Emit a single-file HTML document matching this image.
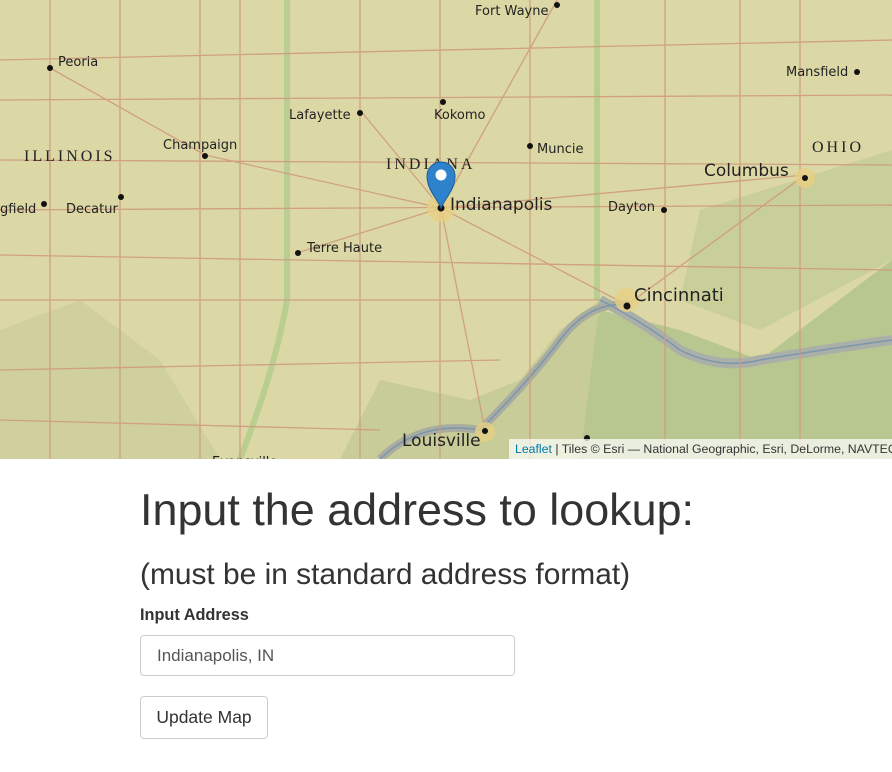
<!DOCTYPE html>
<html><head><meta charset="utf-8"><style>
body{margin:0;width:892px;height:772px;overflow:hidden;background:#fff;font-family:"Liberation Sans",sans-serif;color:#333}
#map{position:absolute;left:0;top:0;width:892px;height:459px;overflow:hidden;background:#dcd8a6}
.attr{position:absolute;left:509px;top:439px;height:20px;width:400px;background:rgba(255,255,255,0.7);font-size:12.3px;line-height:20px;padding-left:6px;color:#333;white-space:nowrap}
.attr a{color:#0078a8;text-decoration:none}
h1{position:absolute;left:140px;top:486px;margin:0;font-size:44.9px;font-weight:400;line-height:48px}
h3{position:absolute;left:140px;top:558px;margin:0;font-size:29.9px;font-weight:400;line-height:34px}
label{position:absolute;left:140px;top:606px;font-size:16.3px;font-weight:bold}
.inp{position:absolute;left:140px;top:635px;width:375px;height:41px;border:1px solid #ccc;border-radius:4px;box-sizing:border-box;padding-left:16px;font-size:17px;line-height:40px;color:#555}
.btn{position:absolute;left:140px;top:696px;width:128px;height:43px;border:1px solid #ccc;border-radius:4px;box-sizing:border-box;text-align:center;font-size:17.5px;line-height:41px;color:#333}
svg text{font-family:"DejaVu Sans",sans-serif;fill:#222}
</style></head><body>
<div id="map">
<svg width="892" height="459" viewBox="0 0 892 459">
<rect width="892" height="459" fill="#dcd8a6"/>
<path d="M560 459 L600 310 L680 330 L760 360 L892 260 L892 459Z" fill="#b8c68f"/>
<path d="M700 210 L892 150 L892 260 L760 330 L680 300Z" fill="#c9cf98"/>
<path d="M340 459 L380 380 L470 400 L520 380 L560 330 L600 300 L580 459Z" fill="#c7cc98"/>
<path d="M0 330 L80 300 L160 360 L220 459 L0 459Z" fill="#d0d09e"/>
<path d="M600 300 Q640 320 680 350 Q720 370 760 360 Q820 350 892 340" stroke="#aab0a8" stroke-width="10" fill="none"/>
<path d="M380 459 Q420 420 480 430 Q530 380 560 340 Q590 300 630 305" stroke="#a9ad9f" stroke-width="8" fill="none"/>
<path d="M600 300 Q640 320 680 350 Q720 370 760 360 Q820 350 892 340" stroke="#7b95b0" stroke-width="1.5" fill="none"/>
<path d="M380 459 Q420 420 480 430 Q530 380 560 340 Q590 300 630 305" stroke="#7b95b0" stroke-width="1.5" fill="none"/>
<g stroke="#a8cc88" stroke-width="6" opacity="0.7" fill="none">
<path d="M287 0 L287 300 Q275 370 240 459"/><path d="M597 0 L597 300"/></g>
<g stroke="#cf9a7c" stroke-width="1.3" fill="none" opacity="0.9">
<path d="M0 60 L892 40"/><path d="M0 100 L892 95"/><path d="M0 160 L892 165"/><path d="M0 210 L892 205"/><path d="M0 255 L892 270"/><path d="M0 300 L600 300"/><path d="M0 370 L500 360"/><path d="M0 420 L380 430"/>
<path d="M50 0 L50 459"/><path d="M120 0 L120 459"/><path d="M200 0 L200 459"/><path d="M240 0 L240 459"/><path d="M360 0 L360 459"/><path d="M440 0 L440 459"/><path d="M530 0 L530 459"/><path d="M665 0 L665 459"/><path d="M740 0 L740 459"/><path d="M800 0 L800 459"/>
<path d="M441 208 L557 0"/><path d="M441 208 L300 252"/><path d="M441 208 L627 305"/><path d="M441 208 L805 175"/><path d="M441 208 L485 430"/><path d="M441 208 L205 155"/><path d="M441 208 L360 110"/><path d="M627 305 L805 175"/><path d="M50 68 L205 155"/>
</g>
<g fill="#e7cf83" opacity="0.8"><circle cx="441" cy="208" r="14"/><circle cx="627" cy="300" r="12"/><circle cx="805" cy="178" r="10"/><circle cx="485" cy="432" r="10"/></g>
<g fill="#111">
<circle cx="557" cy="5" r="3"/><circle cx="50" cy="68" r="3"/><circle cx="360" cy="113" r="3"/><circle cx="443" cy="102" r="3"/><circle cx="530" cy="146" r="3"/><circle cx="205" cy="156" r="3"/><circle cx="44" cy="204" r="3"/><circle cx="121" cy="197" r="3"/><circle cx="441" cy="208" r="3.5"/><circle cx="664" cy="210" r="3"/><circle cx="298" cy="253" r="3"/><circle cx="627" cy="306" r="3.5"/><circle cx="485" cy="431" r="3"/><circle cx="805" cy="178" r="3"/><circle cx="857" cy="72" r="3"/><circle cx="587" cy="438" r="3"/></g>
<g font-size="13">
<text x="475" y="15">Fort Wayne</text><text x="58" y="66">Peoria</text><text x="786" y="76">Mansfield</text>
<text x="289" y="119">Lafayette</text><text x="434" y="119">Kokomo</text><text x="537" y="153">Muncie</text>
<text x="163" y="149">Champaign</text><text x="0" y="213">gfield</text><text x="66" y="213">Decatur</text>
<text x="307" y="252">Terre Haute</text><text x="608" y="211">Dayton</text>
<text x="212" y="466">Evansville</text></g>
<g font-size="16" letter-spacing="3" fill="#333"><text x="24" y="161" style="font-family:'Liberation Serif',serif">ILLINOIS</text><text x="386" y="169" style="font-family:'Liberation Serif',serif">INDIANA</text><text x="812" y="152" style="font-family:'Liberation Serif',serif">OHIO</text></g>
<text x="450" y="210" font-size="17">Indianapolis</text>
<text x="704" y="176" font-size="17">Columbus</text>
<text x="634" y="301" font-size="18">Cincinnati</text>
<text x="402" y="446" font-size="17">Louisville</text>
<path d="M441 208 C437 198 427 190 427 176 A14 14 0 0 1 455 176 C455 190 445 198 441 208Z" fill="#2e82cb" stroke="#1c5e9c" stroke-width="1"/>
<circle cx="441" cy="175" r="5.5" fill="#fff"/>
</svg>
<div class="attr"><a>Leaflet</a> | Tiles © Esri — National Geographic, Esri, DeLorme, NAVTEQ</div>
</div>
<h1>Input the address to lookup:</h1>
<h3>(must be in standard address format)</h3>
<label>Input Address</label>
<div class="inp">Indianapolis, IN</div>
<div class="btn">Update Map</div>
</body></html>
